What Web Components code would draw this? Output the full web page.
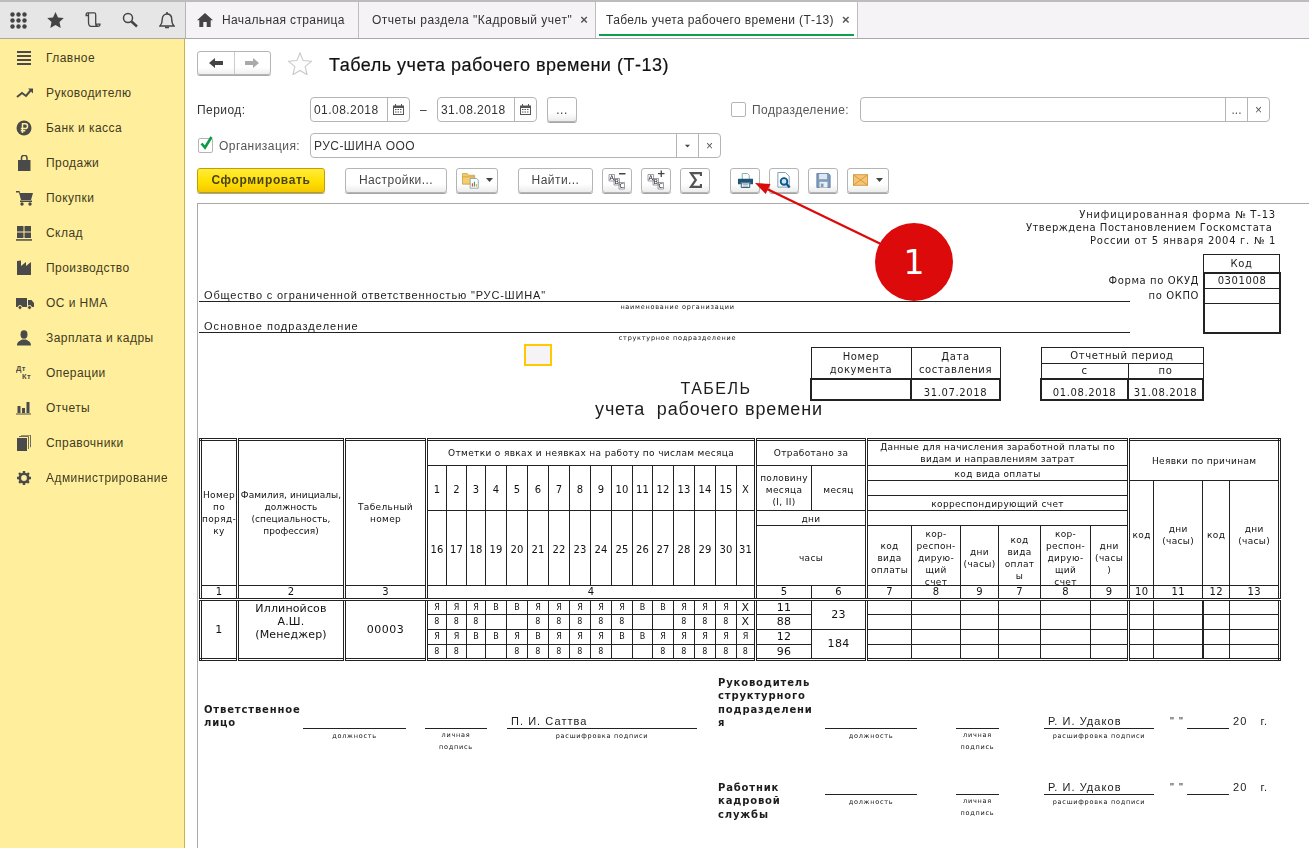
<!DOCTYPE html>
<html lang="ru"><head><meta charset="utf-8"><title>Табель</title>
<style>
html,body{margin:0;padding:0;background:#fff;height:100%;overflow:hidden}
body{font-family:"Liberation Sans",Arial,sans-serif;color:#333}
</style></head>
<body>
<x-app>
  <x-topbar></x-topbar>
  <x-sidebar>
    <x-nav icon="menu">Главное</x-nav>
    <x-nav icon="trend">Руководителю</x-nav>
    <x-nav icon="ruble">Банк и касса</x-nav>
    <x-nav icon="bag">Продажи</x-nav>
    <x-nav icon="cart">Покупки</x-nav>
    <x-nav icon="store">Склад</x-nav>
    <x-nav icon="factory">Производство</x-nav>
    <x-nav icon="truck">ОС и НМА</x-nav>
    <x-nav icon="person">Зарплата и кадры</x-nav>
    <x-nav icon="dtkt">Операции</x-nav>
    <x-nav icon="bars">Отчеты</x-nav>
    <x-nav icon="books">Справочники</x-nav>
    <x-nav icon="gear">Администрирование</x-nav>
  </x-sidebar>
  <x-main>
    <x-titlebar>Табель учета рабочего времени (Т-13)</x-titlebar>
    <x-filters></x-filters>
    <x-actions></x-actions>
    <x-report></x-report>
  </x-main>
  <x-annotation></x-annotation>
</x-app>
<script>
const D='#4a4a4a';
const ICONS={
 menu:`<svg width="16" height="16" viewBox="0 0 16 16" fill="${D}"><rect x="1" y="1" width="14" height="2"/><rect x="1" y="5" width="14" height="2"/><rect x="1" y="9" width="14" height="2"/><rect x="1" y="13" width="14" height="2"/></svg>`,
 trend:`<svg width="18" height="16" viewBox="0 0 18 16"><path d="M1 12l5-4 4 3 5-6" fill="none" stroke="${D}" stroke-width="2"/><path d="M12 3.500h5v5z" fill="${D}"/></svg>`,
 ruble:`<svg width="16" height="16" viewBox="0 0 16 16"><circle cx="8" cy="8" r="7.500" fill="${D}"/><path d="M6.500 13V3.800h2.700a2.300 2.300 0 010 4.700H4.800M4.800 10.800h4.500" fill="none" stroke="#ffee9b" stroke-width="1.500"/></svg>`,
 bag:`<svg width="16" height="16" viewBox="0 0 16 16"><path d="M2 5h12.500v11H2z" fill="${D}"/><path d="M5.500 8V3a2.700 2.700 0 015.500 0v5" fill="none" stroke="${D}" stroke-width="1.500"/></svg>`,
 cart:`<svg width="18" height="16" viewBox="0 0 18 16" fill="${D}"><path d="M0 1h3.500l.5 2H17l-2 7H5L3 2.500H0z"/><rect x="4" y="10.500" width="12" height="1.500"/><circle cx="6" cy="14" r="1.700"/><circle cx="14" cy="14" r="1.700"/></svg>`,
 store:`<svg width="16" height="16" viewBox="0 0 16 16" fill="${D}"><rect x="1" y="1" width="6.500" height="5.500"/><rect x="8.500" y="1" width="6.500" height="5.500"/><rect x="1" y="7.500" width="6.500" height="5.500"/><rect x="8.500" y="7.500" width="6.500" height="5.500"/><rect y="14.200" width="16" height="1.500"/></svg>`,
 factory:`<svg width="16" height="16" viewBox="0 0 16 16" fill="${D}"><path d="M1 15V1l4-.5V6l5-4v4l5-4v13z"/></svg>`,
 truck:`<svg width="18" height="14" viewBox="0 0 18 14" fill="${D}"><path d="M0 2h11v9H0zM12 4h3.500L18 7v4h-6z"/><circle cx="4" cy="11.500" r="2" stroke="#ffee9b"/><circle cx="13.500" cy="11.500" r="2" stroke="#ffee9b"/></svg>`,
 person:`<svg width="16" height="16" viewBox="0 0 16 16" fill="${D}"><ellipse cx="8" cy="4.500" rx="3.500" ry="4.200"/><path d="M1 15.500c0-4 3-4.500 5-6h4c2 1.500 5 2 5 6z"/></svg>`,
 dtkt:`<svg width="16" height="16" viewBox="0 0 16 16" fill="${D}" font-family="Liberation Sans" font-weight="700" font-size="7.500"><text x="0" y="6">Дт</text><text x="6" y="14">Кт</text></svg>`,
 bars:`<svg width="16" height="14" viewBox="0 0 16 14" fill="${D}"><rect x="1.500" y="5" width="3" height="7"/><rect x="6" y="7" width="3" height="5"/><rect x="10.500" y="1" width="3" height="11"/><rect y="12.500" width="15" height="1"/></svg>`,
 books:`<svg width="16" height="16" viewBox="0 0 16 16" fill="${D}"><rect x="1" y="3" width="10" height="13"/><path d="M3 1.500h9.500V14M5 .2h9.500v12" fill="none" stroke="${D}" stroke-width=".8"/></svg>`,
 gear:`<svg width="16" height="16" viewBox="0 0 16 16"><circle cx="8" cy="8" r="4.200" fill="none" stroke="${D}" stroke-width="2.600"/><path d="M8 1v14M1 8h14M3 3l10 10M13 3L3 13" stroke="${D}" stroke-width="2.400" stroke-dasharray="2.600 8.800"/></svg>`,
 grid:`<svg width="17" height="17" viewBox="0 0 17 17" fill="#444"><circle cx="2.500" cy="2.500" r="2.200"/><circle cx="8.500" cy="2.500" r="2.200"/><circle cx="14.500" cy="2.500" r="2.200"/><circle cx="2.500" cy="8.500" r="2.200"/><circle cx="8.500" cy="8.500" r="2.200"/><circle cx="14.500" cy="8.500" r="2.200"/><circle cx="2.500" cy="14.500" r="2.200"/><circle cx="8.500" cy="14.500" r="2.200"/><circle cx="14.500" cy="14.500" r="2.200"/></svg>`,
 star:`<svg width="17" height="16" viewBox="0 0 17 16" fill="#444"><path d="M8.500 0l2.500 5.500 5.800.6-4.300 4 1.200 5.900-5.200-3-5.200 3 1.200-5.900-4.300-4 5.800-.6z"/></svg>`,
 scroll:`<svg width="16" height="16" viewBox="0 0 16 16" fill="none" stroke="#444" stroke-width="1.300"><path d="M3.500 3.500H1.200V1.800A1.300 1.300 0 012.500.8h7.200c1 0 1 1 1 2v9c0 1.500 1 2.400 2.300 2.400h.6c1 0 1.400-.8 1.400-2h-3.700M3.500 1.500V10c0 3 1 4.300 2.700 4.300h7"/></svg>`,
 search:`<svg width="16" height="16" viewBox="0 0 16 16" fill="none" stroke="#444"><circle cx="6" cy="6" r="4.500" stroke-width="1.500"/><path d="M9.500 9.500l5.500 5" stroke-width="2.500"/></svg>`,
 bell:`<svg width="16" height="17" viewBox="0 0 16 17" fill="none" stroke="#444" stroke-width="1.400"><path d="M1 14h14c-1.500-1.500-2.300-3-2.300-7 0-3-2-5-4.700-5S3.300 4 3.300 7c0 4-.8 5.500-2.300 7z"/><path d="M8 0v2M6 15.500h4" stroke-width="1.600"/></svg>`,
 home:`<svg width="16" height="14" viewBox="0 0 16 14" fill="#444"><path d="M8 0l8 7.300h-2.300V14H9.700V9H6.300v5H2.300V7.300H0z"/></svg>`,
 back:`<svg width="14" height="10" viewBox="0 0 14 10" fill="#444"><path d="M0 5l6-5v3h8v4H6v3z"/></svg>`,
 fwd:`<svg width="14" height="10" viewBox="0 0 14 10" fill="#aaa"><path d="M14 5L8 0v3H0v4h8v3z"/></svg>`,
 cal:`<svg width="11" height="11" viewBox="0 0 11 11" fill="#555"><path d="M0 1.500h2V0h1v1.500h5V0h1v1.500h2V11H0z"/><path d="M1 4h9v6H1z" fill="#fff"/><path d="M2 5h1.500v1H2zM4.500 5H6v1H4.500zM7 5h1.500v1H7zM2 7.500h1.500v1H2zM4.500 7.500H6v1H4.500zM7 7.500h1.500v1H7z"/></svg>`,
 folder:`<svg width="18" height="17" viewBox="0 0 22 21"><path d="M.5 4V2h6l1 2h8v11H.5z" fill="#f4cd6e" stroke="#c9a044"/><path d="M.5 6h15" stroke="#c9a044"/><path d="M10 8h8l2 2v10H10z" fill="#fff" stroke="#7d99ad"/><rect x="12" y="14" width="1.500" height="4" fill="#d94b3f"/><rect x="14.500" y="12" width="1.500" height="6" fill="#3aa757"/><rect x="17" y="15" width="1.500" height="3" fill="#e0a52f"/></svg>`,
 abcm:`<svg width="18" height="20" viewBox="0 0 18 20" font-family="DejaVu Sans" font-size="6.500" fill="#222"><path d="M1 4.500h5.500v6.500H1zM6 8.500h5.500V15H6zM11 12.500h5.500V19H11z" fill="#fff" stroke="#778" stroke-width=".7"/><text x="1.400" y="10">A</text><text x="6.500" y="14">B</text><text x="11.500" y="18">C</text><path d="M11 3h6.500v1.500H11z" fill="#444"/></svg>`,
 abcp:`<svg width="18" height="20" viewBox="0 0 18 20" font-family="DejaVu Sans" font-size="6.500" fill="#222"><path d="M1 4.500h5.500v6.500H1zM6 8.500h5.500V15H6zM11 12.500h5.500V19H11z" fill="#fff" stroke="#778" stroke-width=".7"/><text x="1.400" y="10">A</text><text x="6.500" y="14">B</text><text x="11.500" y="18">C</text><path d="M11 3h6.500v1.300H11zM13.600.500h1.300v6.500h-1.300z" fill="#444"/></svg>`,
 sigma:`<svg width="13" height="16" viewBox="0 0 13 16"><path d="M12 4V1.200H2l4.800 6.800L2 14.800h10V12" fill="none" stroke="#555" stroke-width="2.200"/></svg>`,
 print:`<svg width="15" height="15" viewBox="0 0 16 16"><path d="M4.500.5h5.500l2 2V7H4.500z" fill="#fff" stroke="#8aa"/><path d="M0 6h16v6h-3v-2H3v2H0z" fill="#1f5578"/><path d="M3.500 10.500h9v5h-9z" fill="#fff" stroke="#1f5578"/><path d="M5 12h6M5 14h6" stroke="#89a"/></svg>`,
 preview:`<svg width="14" height="17" viewBox="0 0 14 18"><path d="M.5.500h8l4 4V16H.5z" fill="#fff" stroke="#7d99ad"/><circle cx="7" cy="10" r="3.500" fill="#cfe6f2" stroke="#0f5a8c" stroke-width="2"/><path d="M9.500 12.500l3.500 4" stroke="#0f5a8c" stroke-width="2.500"/></svg>`,
 save:`<svg width="15" height="15" viewBox="0 0 16 17"><path d="M.5.500h13l2 2v14H.5z" fill="#7f9cbd" stroke="#5c7da0"/><path d="M3 1h9v6H3z" fill="#dfe7ef"/><path d="M3.500 10h9v6.500h-9z" fill="#eee"/><path d="M5 12h3v4H5z" fill="#7f9cbd"/></svg>`,
 mail:`<svg width="15" height="12" viewBox="0 0 17 13"><rect x=".5" y=".5" width="16" height="12" fill="#f4c477" stroke="#d49333"/><path d="M1 1l15 11M16 1L1 12" stroke="#d49333"/></svg>`,
 caret:`<svg width="7" height="4" viewBox="0 0 7 4" fill="#444"><path d="M0 0h7L3.500 4z"/></svg>`,
 starO:`<svg width="24" height="23" viewBox="0 0 24 23"><path d="M12 1l3.200 7.600 8.200.7-6.200 5.400 1.900 8-7.100-4.200-7.100 4.200 1.900-8L.6 9.300l8.200-.7z" fill="#fdfdfd" stroke="#c9c9c9" stroke-width="1.100"/></svg>`,
 check:`<svg width="15" height="15" viewBox="0 0 15 15"><path d="M2.500 7.500l3.500 4L12.500 1" fill="none" stroke="#0a9b46" stroke-width="2.600"/></svg>`
};
const def=(name,css,html)=>customElements.define(name,class extends HTMLElement{
  constructor(){super();this.attachShadow({mode:'open'}).innerHTML=`<style>${css}</style>${typeof html==='function'?'':html}`;}
  connectedCallback(){ if(typeof html==='function'){ if(!this._d){this._d=1;this.shadowRoot.innerHTML+=html(this);} } }
});
const TXT='font:12px/16px "Liberation Sans",Arial,sans-serif;letter-spacing:.45px;color:#333;';

def('x-icon',':host{display:inline-flex;align-items:center;justify-content:center;line-height:0}',e=>ICONS[e.getAttribute('name')]||'');

def('x-app',`:host{display:grid;grid-template-columns:185px 1fr;grid-template-rows:39px 809px;width:1309px;height:848px;position:relative;overflow:hidden;opacity:.999}
 ::slotted(x-topbar){grid-column:1/3}`,'<slot></slot>');

def('x-tab',`:host{display:flex;align-items:center;box-sizing:border-box;height:36px;border-right:1px solid #bdbdbd;${TXT}letter-spacing:.37px;position:relative}
 :host([active]){background:#fff;border-left:1px solid #bdbdbd;margin-left:-1px}
 .u{display:none}:host([active]) .u{display:block;position:absolute;left:3px;right:3px;bottom:2px;height:2px;background:#0fa04d}
 .x{font:700 13px/16px "Liberation Sans",Arial,sans-serif;color:#555}`,
 e=>`<div class="u"></div>${e.hasAttribute('home')?'<x-icon name="home" style="margin-left:11px;margin-right:9px"></x-icon>':`<span style="width:${e.getAttribute('pad')||13}px"></span>`}<slot></slot>${e.hasAttribute('home')?'':`<span class="x" style="margin-left:${e.getAttribute('xm')||7}px">×</span>`}`);

def('x-topbar',`:host{display:flex;box-sizing:border-box;border-top:2px solid #bcbcbc;border-bottom:1px solid #a9a9a9;background:#f6f3f7;height:39px}
 .tools{display:flex;align-items:center;box-sizing:border-box;width:186px;background:#e6e6e6;border-right:1px solid #b5b5b5;padding-left:10px}
 .tabs{display:flex;flex:1}`,
 `<div class="tools">
   <x-icon name="grid"></x-icon><x-icon name="star" style="margin-left:20px"></x-icon>
   <x-icon name="scroll" style="margin-left:21px"></x-icon><x-icon name="search" style="margin-left:21px"></x-icon>
   <x-icon name="bell" style="margin-left:21px"></x-icon></div>
  <div class="tabs">
   <x-tab home style="width:173px">Начальная страница</x-tab>
   <x-tab pad="13" xm="8" style="width:237px;letter-spacing:.5px">Отчеты раздела "Кадровый учет"</x-tab>
   <x-tab active pad="10" xm="8" style="width:263px">Табель учета рабочего времени (Т-13)</x-tab>
  </div>`);

def('x-sidebar',`:host{display:block;box-sizing:border-box;background:#ffee9b;border-right:1px solid #c8b44a;padding-top:1px;height:809px}`,'<slot></slot>');
def('x-nav',`:host{display:flex;align-items:center;height:35px;${TXT}color:#3f3a22}
 .i{width:46px;box-sizing:border-box;padding-left:16px;display:flex}`,
 e=>`<span class="i"><x-icon name="${e.getAttribute('icon')}"></x-icon></span><slot></slot>`);

def('x-main',`:host{display:block;padding:12px 0 0 12px;overflow:hidden;height:797px}`,'<slot></slot>');

def('x-titlebar',`:host{display:flex;align-items:center;height:24px}
 .nav{display:flex;box-sizing:border-box;width:74px;height:24px;border:1px solid #b5b5b5;border-radius:3px;background:linear-gradient(#fff 70%,#eee);box-shadow:0 1px 0 #aaa}
 .nav span{flex:1;display:flex;align-items:center;justify-content:center}
 .nav span:first-child{border-right:1px solid #ccc}
 h1{margin:4px 0 0;font:400 18px/24px "Liberation Sans",Arial,sans-serif;letter-spacing:.5px;color:#111;-webkit-text-stroke:.2px #111}`,
 `<div class="nav"><span><x-icon name="back"></x-icon></span><span><x-icon name="fwd"></x-icon></span></div>
  <x-icon name="starO" style="margin:1px 17px 0 17px"></x-icon><h1><slot></slot></h1>`);

def('x-field',`:host{display:inline-flex;box-sizing:border-box;height:25px;border:1px solid #b5b5b5;border-radius:4px;background:#fff;align-items:stretch;${TXT}color:#333}
 .t{flex:1;padding-left:3px;line-height:24px;white-space:nowrap;overflow:hidden}
 :host([btns="cal"]) .t{line-height:25px}
 .b{display:flex;align-items:center;justify-content:center;border-left:1px solid #b5b5b5;width:21px;color:#555;font-size:12px;letter-spacing:0}`,
 e=>`<div class="t"><slot></slot></div>`+(e.getAttribute('btns')||'').split(' ').filter(Boolean).map(b=>
   `<div class="b">${b==='cal'?'<x-icon name="cal"></x-icon>':b==='dd'?'<x-icon name="caret" style="transform:scale(.8)"></x-icon>':b==='clr'?'×':'...'}</div>`).join(''));

def('x-check',`:host{display:inline-flex;box-sizing:border-box;width:15px;height:15px;border:1px solid #b5b5b5;border-radius:2px;background:#fff;position:relative}
 x-icon{position:absolute;left:0;top:-3px}`,e=>e.hasAttribute('on')?'<x-icon name="check"></x-icon>':'');

def('x-filters',`:host{display:block;margin-top:22px;${TXT}}
 .r{display:flex;align-items:center;height:25px}
 .r2{margin-top:11px}
 .lb{width:113px}
 .dash{width:27px;text-align:center}`,
 `<div class="r"><span class="lb">Период:</span>
   <x-field btns="cal" style="width:100px">01.08.2018</x-field><span class="dash">–</span>
   <x-field btns="cal" style="width:100px">31.08.2018</x-field>
   <x-btn style="margin-left:10px;width:30px">...</x-btn>
   <x-check style="margin-left:154px"></x-check><span style="margin-left:6px;width:108px;color:#555">Подразделение:</span>
   <x-field btns="dots clr" style="width:410px"></x-field></div>
  <div class="r r2"><x-check on style="margin-left:1px"></x-check><span style="margin-left:6px;width:91px;color:#555">Организация:</span>
   <x-field btns="dd clr" style="width:411px">РУС-ШИНА ООО</x-field></div>`);

def('x-btn',`:host{display:inline-flex;align-items:center;justify-content:center;gap:6px;box-sizing:border-box;height:25px;border:1px solid #b5b5b5;border-radius:3px;background:linear-gradient(#fff 65%,#ececec);box-shadow:0 1px 0 #a5a5a5;${TXT}color:#444}
 :host([primary]){background:linear-gradient(#ffeb3c,#ffe000 55%,#f4c800);border-color:#c0a000;font-weight:700;color:#4a4320;letter-spacing:.65px}`,'<slot></slot>');

def('x-actions',`:host{display:flex;align-items:center;height:26px;margin-top:9px}`,
 `<x-btn primary style="width:128px">Сформировать</x-btn>
  <x-btn style="width:102px;margin-left:20px">Настройки...</x-btn>
  <x-btn style="width:42px;margin-left:9px"><x-icon name="folder"></x-icon><x-icon name="caret"></x-icon></x-btn>
  <x-btn style="width:75px;margin-left:20px">Найти...</x-btn>
  <x-btn style="width:30px;margin-left:9px"><x-icon name="abcm"></x-icon></x-btn>
  <x-btn style="width:30px;margin-left:9px"><x-icon name="abcp"></x-icon></x-btn>
  <x-btn style="width:30px;margin-left:9px"><x-icon name="sigma"></x-icon></x-btn>
  <x-btn style="width:30px;margin-left:20px"><x-icon name="print"></x-icon></x-btn>
  <x-btn style="width:30px;margin-left:9px"><x-icon name="preview"></x-icon></x-btn>
  <x-btn style="width:30px;margin-left:9px"><x-icon name="save"></x-icon></x-btn>
  <x-btn style="width:42px;margin-left:9px;gap:8px"><x-icon name="mail"></x-icon><x-icon name="caret"></x-icon></x-btn>`);

const DOC='font:10px/13px "DejaVu Sans",Verdana,sans-serif;letter-spacing:.45px;color:#1c1c1c;';
const HAND='font:11px/13px "Liberation Sans",Arial,sans-serif;letter-spacing:1.05px;color:#1c1c1c;';
const HINT='font:6.5px/12px "DejaVu Sans",Verdana,sans-serif;letter-spacing:.75px;color:#111;text-align:center;';

def('x-orgline',`:host{display:block;width:931px;margin-left:1px}
 .v{box-sizing:border-box;height:14px;border-bottom:1px solid #222;padding-left:5px;${HAND}line-height:15px;white-space:nowrap}
 :host([tight]) .v{letter-spacing:.82px}
 .h{height:17px;${HINT}line-height:11px;padding-left:26px}`,
 e=>`<div class="v"><slot></slot></div><div class="h">${e.getAttribute('hint')}</div>`);

def('x-codebox',`:host{display:flex;justify-content:flex-end;${DOC}letter-spacing:.6px}
 .l div{height:15px;line-height:15px;text-align:right;padding-right:4px}
 .l{padding-top:19px}
 .c{width:78px;box-sizing:border-box;text-align:center}
 .k{box-sizing:border-box;height:18px;border:1px solid #222;border-bottom:0;line-height:17px;margin-right:1px}
 .b{border:2px solid #222;height:62px;box-sizing:border-box}
 .b div{height:15px;border-bottom:1px solid #222;line-height:14px;box-sizing:border-box}`,
 `<div class="l"><div>Форма по ОКУД</div><div>по ОКПО</div></div>
  <div class="c"><div class="k">Код</div><div class="b"><div>0301008</div><div></div></div></div>`);

def('x-doctable',`:host{display:block;${DOC}letter-spacing:.6px;text-align:center;line-height:13px}
 table{border-collapse:collapse;table-layout:fixed}
 td{padding:0;border:1px solid #222;overflow:hidden}
 .t{border:2px solid #222;vertical-align:bottom}`,
 e=>{const w=e.getAttribute('w').split(',');const h=e.getAttribute('kind');
  const cg=`<colgroup>${w.map(x=>`<col style="width:${x}px">`).join('')}</colgroup>`;
  if(h==='a')return `<table>${cg}<tr style="height:31px"><td>Номер<br>документа</td><td>Дата<br>составления</td></tr><tr style="height:21px"><td class="t"></td><td class="t">31.07.2018</td></tr></table>`;
  return `<table>${cg}<tr style="height:16px"><td colspan="2">Отчетный период</td></tr><tr style="height:15px"><td>с</td><td>по</td></tr><tr style="height:21px"><td class="t">01.08.2018</td><td class="t">31.08.2018</td></tr></table>`;});

def('x-title',`:host{display:block;width:1036px;text-align:center;color:#1c1c1c;font-family:"Liberation Sans",Arial,sans-serif;padding-top:37px}
 .a{font-size:16px;line-height:20px;letter-spacing:1.5px}
 .b{font-size:18px;line-height:21px;letter-spacing:.85px;white-space:pre;padding-right:14px}`,
 `<div class="a">ТАБЕЛЬ</div><div class="b">учета  рабочего времени</div>`);

def('x-timesheet',`:host{display:block;margin-left:1px;${DOC}color:#111;font-size:9px;line-height:12px;letter-spacing:.35px}
 table{border-collapse:collapse;table-layout:fixed;width:1079px;border:3px double #222;text-align:center}
 td{padding:0;border:1px solid #222;overflow:hidden}
 .dl{border-left:3px double #222}
 .db td{border-bottom:3px double #222}
 .day{font-size:10px;letter-spacing:.2px;padding-top:3px}
 .n{font-size:10px}
 .s{font-size:8px;line-height:12px;letter-spacing:0}
 .s2{font-size:8px;line-height:12px}
 .v{font-size:11px;line-height:12px}
 .big{font-size:11px;line-height:13px;letter-spacing:.5px}
 .nm{vertical-align:top;letter-spacing:.15px;padding-top:1px}
 .tk{border-left:2px solid #222}
 .nw{white-space:nowrap;letter-spacing:.05px}
 .bt{vertical-align:bottom}
 .p2{padding-top:3px}
 .sh{height:58px;line-height:12px;display:flex;flex-direction:column;justify-content:center;transform:translateY(2px)}`,
 e=>{
  const W=[37,107,82,20,20,19,21,21,21,21,21,21,21,20,21,21,21,21,19,56,55,45,49,38,42,50,38,25,49,27,50];
  const H=[26,15,15,15,15,60,13,15,15,15,15];
  const d=(a,b)=>{let s='';for(let i=a;i<=b;i++)s+=`<td class="day" rowspan="${a<16?3:2}">${i}</td>`;return s;};
  const sh=t=>`<div class="sh"><div>${t}</div></div>`;
  const rows=[];
  rows.push(`<td rowspan="6">Номер<br>по<br>поряд-<br>ку</td><td rowspan="6" class="dl nw">Фамилия, инициалы,<br>должность<br>(специальность,<br>профессия)</td><td rowspan="6" class="dl">Табельный<br>номер</td><td colspan="16" class="dl">Отметки о явках и неявках на работу по числам месяца</td><td colspan="2" class="dl">Отработано за</td><td colspan="6" class="dl" style="line-height:12px">Данные для начисления заработной платы по<br>видам и направлениям затрат</td><td colspan="4" rowspan="2" class="dl">Неявки по причинам</td>`);
  rows.push(d(1,15).replace('<td','<td style="border-left:3px double #222"')+`<td class="day" rowspan="3">X</td><td rowspan="3" class="dl p2">половину<br>месяца<br>(I, II)</td><td rowspan="3" class="p2">месяц</td><td colspan="6" class="dl bt">код вида оплаты</td>`);
  rows.push(`<td colspan="6" class="dl"></td><td rowspan="4" class="dl p2">код</td><td rowspan="4" class="p2">дни<br>(часы)</td><td rowspan="4" class="p2">код</td><td rowspan="4" class="p2">дни<br>(часы)</td>`);
  rows.push(`<td colspan="6" class="dl bt">корреспондирующий счет</td>`);
  rows.push(d(16,31).replace('<td','<td style="border-left:3px double #222"')+`<td colspan="2" class="dl bt">дни</td><td colspan="6" class="dl"></td>`);
  rows.push(`<td colspan="2" class="dl">${sh('часы')}</td><td class="dl">${sh('код<br>вида<br>оплаты')}</td><td>${sh('кор-<br>респон-<br>дирую-<br>щий<br>счет')}</td><td>${sh('дни<br>(часы)')}</td><td>${sh('код<br>вида<br>оплат<br>ы')}</td><td>${sh('кор-<br>респон-<br>дирую-<br>щий<br>счет')}</td><td>${sh('дни<br>(часы<br>)')}</td>`);
  const nums=['1','2','3'].map((x,i)=>`<td class="n${i?' dl':''}">${x}</td>`).join('')+`<td class="n dl" colspan="16">4</td><td class="n dl">5</td><td class="n">6</td><td class="n dl">7</td><td class="n">8</td><td class="n">9</td><td class="n">7</td><td class="n">8</td><td class="n">9</td><td class="n dl">10</td><td class="n">11</td><td class="n">12</td><td class="n">13</td>`;
  rows.push(nums);
  const data=[
   'Я Я Я В В Я Я Я Я Я В В Я Я Я X'.split(' '),
   '8 8 8 - - 8 8 8 8 8 - - 8 8 8 X'.split(' '),
   'Я Я В В Я В Я Я Я В В Я Я Я Я Я'.split(' '),
   '8 8 - - 8 8 8 8 8 - - 8 8 8 8 8'.split(' ')];
  const hours=['11','88','12','96'],mon=['23','','184',''];
  data.forEach((r,i)=>{
   let s='';
   if(i===0)s+=`<td rowspan="4" class="big">1</td><td rowspan="4" class="big dl nm">Иллинойсов<br>А.Ш.<br>(Менеджер)</td><td rowspan="4" class="big dl">00003</td>`;
   s+=r.map((c,j)=>{const cls=c==='X'?'v':(i%2?'s2':'s');return `<td class="${cls}${j===0?' dl':''}">${c==='-'?'':c}</td>`;}).join('');
   s+=`<td class="v dl">${hours[i]}</td>`;
   if(i%2===0)s+=`<td rowspan="2" class="v">${mon[i]}</td>`;
   s+='<td class="dl"></td><td></td><td></td><td></td><td></td><td></td><td class="dl"></td><td></td><td class="tk"></td><td></td>';
   rows.push(s);
  });
  return `<table><colgroup>${W.map(x=>`<col style="width:${x}px">`).join('')}</colgroup>${rows.map((r,i)=>`<tr${i===6?' class="db"':''} style="height:${H[i]}px">${r}</tr>`).join('')}</table>`;
 });

def('x-sign',`:host{display:grid;grid-template-columns:var(--cols);align-items:start}
 .t{font:700 10px/13.300px "DejaVu Sans",Verdana,sans-serif;letter-spacing:.85px;color:#1c1c1c;padding-top:var(--tt,0);white-space:nowrap}
 .f{padding-top:var(--top);min-width:0}
 .v{box-sizing:border-box;height:14px;border-bottom:1px solid #222;padding-left:4px;${HAND}white-space:nowrap}
 .h{${HINT}padding-top:0;line-height:12px;margin-top:1px}
 .h.p{margin-top:0}
 .d{padding-top:var(--top);display:flex;${HAND}white-space:pre;margin-left:16px}
 .d i{display:block;width:42px;height:13px;border-bottom:1px solid #222;margin:0 4px 0 3px}
 .d b{font-weight:400;margin-left:13px}`,
 e=>`<div class="t"><slot name="title"></slot></div>
    <div class="f"><div class="v"></div><div class="h">должность</div></div><span></span>
    <div class="f"><div class="v"></div><div class="h p">личная<br>подпись</div></div><span></span>
    <div class="f"><div class="v">${e.getAttribute('name')}</div><div class="h">расшифровка подписи</div></div>`+
    (e.hasAttribute('date')?`<div class="d">" "<i></i>20<b>г.</b></div>`:''));

def('x-report',`:host{display:block;box-sizing:border-box;width:1112px;height:700px;margin-top:10px;border-left:1px solid #a9a9a9;border-top:1px solid #a9a9a9;position:relative;${DOC}}
 .note{height:43px;box-sizing:border-box;padding:4px 33px 0 0;text-align:right}
 .note div{white-space:pre}
 .stack{display:grid}
 .stack>*{grid-area:1/1}
 .sec2{height:95px}
 .org{padding-top:41px}
 .code{margin-right:28px;align-self:start;padding-top:7px}
 .sec3{height:96px}
 .docs{display:flex;gap:39px;margin:5px 0 0 612px;align-self:start}
 .sel{position:absolute;left:326px;top:140px;width:28px;height:22px;box-sizing:border-box;border:2px solid #ffc800;background:#f6f3f7}
 .sig{display:flex;margin-top:15px}
 .left{width:514px;margin-left:6px}
 .right{flex:1}`,
 `<div class="note"><div style="letter-spacing:.8px">Унифицированная форма № Т-13</div><div style="letter-spacing:.52px">Утверждена Постановлением Госкомстата </div><div style="letter-spacing:.72px">России от 5 января 2004 г. № 1</div></div>
  <div class="stack sec2">
   <div class="org"><x-orgline tight hint="наименование организации">Общество с ограниченной ответственностью "РУС-ШИНА"</x-orgline>
   <x-orgline hint="структурное подразделение">Основное подразделение</x-orgline></div>
   <x-codebox class="code"></x-codebox>
  </div>
  <div class="stack sec3"><x-title></x-title>
   <div class="docs"><x-doctable kind="a" w="100,89"></x-doctable><x-doctable kind="b" w="87,75"></x-doctable></div>
  </div>
  <x-timesheet></x-timesheet>
  <div class="sig">
   <div class="left"><x-sign name="П. И. Саттва" style="--cols:99px 103px 19px 62px 20px 190px;--top:39px;--tt:27px;"><span slot="title">Ответственное<br>лицо</span></x-sign></div>
   <div class="right">
    <x-sign date name="Р. И. Удаков" style="--cols:107px 92px 39px 43px 45px 110px 150px;--top:39px;height:105px"><span slot="title">Руководитель<br>структурного<br>подразделени<br>я</span></x-sign>
    <x-sign date name="Р. И. Удаков" style="--cols:107px 92px 39px 43px 45px 110px 150px;--top:0px"><span slot="title">Работник<br>кадровой<br>службы</span></x-sign>
   </div>
  </div>
  <div class="sel"></div>`);

def('x-annotation',`:host{position:absolute;inset:0;pointer-events:none;display:block}
 svg{position:absolute;left:0;top:0}
 .c{position:absolute;left:875px;top:223px;width:78px;height:78px;border-radius:50%;background:#dc0a0a;color:#fff;display:flex;align-items:center;justify-content:center;font:33px/1 "DejaVu Sans",sans-serif}`,
 `<svg width="1309" height="848"><line x1="766" y1="188.500" x2="885" y2="246" stroke="#dc0a0a" stroke-width="2.400"/><path d="M755 183l15.500.9-4.800 10.100z" fill="#dc0a0a"/></svg><div class="c">1</div>`);
</script>
</body></html>
